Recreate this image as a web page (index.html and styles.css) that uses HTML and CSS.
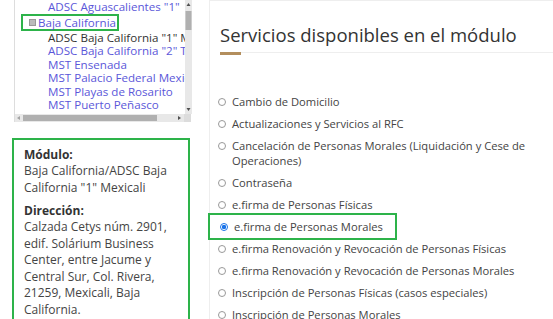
FILE: index.html
```html
<!DOCTYPE html>
<html>
<head>
    <title>Servicios disponibles</title>
    <link rel="stylesheet" href="styles.css">
</head>
<body>
    <div class="page">
        <div class="side">
            <!-- Tree of offices with its scrollbars -->
            <div class="tree">
                <div class="tree-row">
                    <div class="tree-view">
                        <div class="leaf">ADSC Aguascalientes "1"</div>
                        <div class="node"><span class="node-label"><span class="minus"></span>Baja California</span></div>
                        <div class="leaf current">ADSC Baja California "1" Mexicali</div>
                        <div class="leaf">ADSC Baja California "2" Tijuana</div>
                        <div class="leaf">MST Ensenada</div>
                        <div class="leaf">MST Palacio Federal Mexicali</div>
                        <div class="leaf">MST Playas de Rosarito</div>
                        <div class="leaf">MST Puerto Peñasco</div>
                        <div class="leaf">MST San Luis Río Colorado</div>
                    </div>
                    <svg class="vbar" width="7" height="114" viewBox="0 0 7 114">
                        <rect x="0" y="0" width="7" height="114" fill="#e8e8e8"/>
                        <path d="M3.5 3 L1.5 6 L5.5 6 Z" fill="#505050"/>
                        <rect x="0.5" y="11" width="6" height="19" fill="#b0b0b0"/>
                        <path d="M3.5 111 L1.5 108 L5.5 108 Z" fill="#505050"/>
                    </svg>
                </div>
                <svg class="hbar" width="176" height="8" viewBox="0 0 176 8">
                    <rect x="0" y="0" width="176" height="8" fill="#e8e8e8"/>
                    <path d="M2 4 L5 2 L5 6 Z" fill="#a3a3a3"/>
                    <rect x="8" y="1" width="134" height="6" fill="#b0b0b0"/>
                    <path d="M166 4 L163 2 L163 6 Z" fill="#505050"/>
                    <rect x="169" y="0" width="7" height="8" fill="#dcdcdc"/>
                </svg>
            </div>

            <!-- Selected office -->
            <div class="info">
                <div class="info-title">Módulo:</div>
                <div class="info-text">Baja California/ADSC Baja California "1" Mexicali</div>
                <div class="info-title">Dirección:</div>
                <div class="info-text">Calzada Cetys núm. 2901, edif. Solárium Business Center, entre Jacume y Central Sur, Col. Rivera, 21259, Mexicali, Baja California.</div>
            </div>
        </div>

        <div class="card">
            <h2>Servicios disponibles en el módulo</h2>
            <div class="rule"><span class="gold"></span></div>
            <ul class="services">
                <li><span class="radio"></span><span>Cambio de Domicilio</span></li>
                <li><span class="radio"></span><span>Actualizaciones y Servicios al RFC</span></li>
                <li><span class="radio"></span><span>Cancelación de Personas Morales (Liquidación y Cese de Operaciones)</span></li>
                <li><span class="radio"></span><span>Contraseña</span></li>
                <li><span class="radio"></span><span>e.firma de Personas Físicas</span></li>
                <li class="selected"><span class="radio on"></span><span>e.firma de Personas Morales</span></li>
                <li><span class="radio"></span><span>e.firma Renovación y Revocación de Personas Físicas</span></li>
                <li><span class="radio"></span><span>e.firma Renovación y Revocación de Personas Morales</span></li>
                <li><span class="radio"></span><span>Inscripción de Personas Físicas (casos especiales)</span></li>
                <li><span class="radio"></span><span>Inscripción de Personas Morales</span></li>
            </ul>
        </div>
    </div>
</body>
</html>
```

FILE: styles.css
```css
body {
    margin: 0;
    font-family: "Open Sans", sans-serif;
    background-color: #fff;
    color: #444;
    overflow: hidden;
}
.page {
    display: flex;
    height: 319px;
    overflow: hidden;
}
.side {
    width: 209px;
    flex-shrink: 0;
}

/* tree */
.tree {
    margin-left: 14px;
    width: 177px;
    height: 122px;
    border-left: 1px solid #ddd;
    display: flex;
    flex-direction: column;
}
.tree-row {
    display: flex;
    height: 114px;
}
.tree-view {
    flex: 1;
    min-width: 0;
    overflow: hidden;
}
.leaf {
    font-size: 11.6px;
    line-height: 13.5px;
    padding-left: 33px;
    color: #5b57d9;
    white-space: nowrap;
}
.leaf.current {
    color: #333;
}
.node {
    font-size: 11.6px;
    line-height: 13px;
    padding-left: 6px;
    white-space: nowrap;
}
.node-label {
    display: inline-flex;
    align-items: center;
    color: #5b57d9;
    border: 2px solid #2db34a;
    padding: 0 1px 0 6px;
}
.minus {
    display: inline-block;
    width: 5px;
    height: 5px;
    background-color: #bbb;
    border: 1px solid #999;
    margin-right: 2px;
}
.vbar, .hbar {
    display: block;
    flex-shrink: 0;
}

/* selected office */
.info {
    margin: 16px 0 0 12px;
    width: 178px;
    border: 2px solid #2db34a;
    box-sizing: border-box;
    padding: 6px 10px 0 10px;
    height: 200px;
}
.info-title {
    font-weight: bold;
    font-size: 12px;
    color: #333;
    line-height: 17px;
}
.info-text {
    font-size: 12px;
    line-height: 16.5px;
    color: #444;
    margin-bottom: 6px;
}

/* services */
.card {
    flex: 1;
    border-left: 1px solid #eee;
    border-top: 1px solid #eee;
    padding-left: 10px;
}
h2 {
    margin: 22px 0 0 0;
    font-size: 18.5px;
    font-weight: 500;
    color: #333;
    line-height: 24px;
    white-space: nowrap;
}
.rule {
    margin-top: 5px;
    border-top: 1px solid #eee;
    height: 3px;
}
.gold {
    display: block;
    width: 21px;
    height: 3px;
    margin-top: -1px;
    background-color: #b38e5d;
}
.services {
    list-style: none;
    margin: 38px 0 0 0;
    padding: 0;
}
.services li {
    display: flex;
    align-items: flex-start;
    font-size: 11.2px;
    line-height: 15px;
    color: #444;
    margin-bottom: 7px;
}
.radio {
    flex-shrink: 0;
    width: 6px;
    height: 6px;
    border: 1px solid #999;
    border-radius: 50%;
    margin: 4px 6px 0 -2px;
}
.radio.on {
    border-color: #1a73e8;
    background: radial-gradient(circle, #1a73e8 45%, #fff 60%);
}
.services li.selected {
    border: 2px solid #2db34a;
    width: 173px;
    margin-left: -12px;
    padding: 4px 0 4px 12px;
    margin-top: -6px;
    margin-bottom: 1px;
}
```
